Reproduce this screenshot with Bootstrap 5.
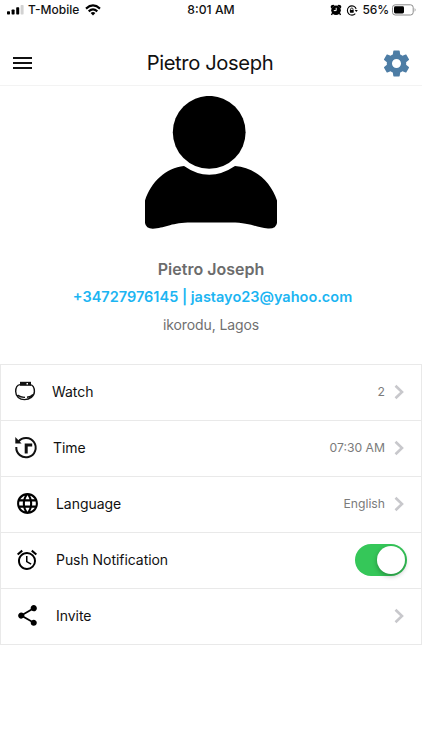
<!DOCTYPE html>
<html lang="en">
<head>
<meta charset="utf-8">
<meta name="viewport" content="width=device-width, initial-scale=1">
<title>Pietro Joseph</title>
<link href="https://cdn.jsdelivr.net/npm/bootstrap@5.3.0/dist/css/bootstrap.min.css" rel="stylesheet">
<style>
body{font-family:Inter,"Liberation Sans",sans-serif;color:#111;background:#fff;overflow:hidden}
svg{display:block;flex:none}
.status{height:20px;font-size:12px;font-weight:500;line-height:20px;padding:0 5px 0 7px;color:#111}
.status>div{flex:1 1 0}
.status>.clock{flex:none;font-size:12.2px;padding-right:2px}
.carrier{margin-left:4px;margin-right:6px}
.lock{margin:0 4px 0 4px}
.battery-text{letter-spacing:-.1px}
.cell{margin-left:3px}
.topbar{height:66px;padding:21px 9px 0 13px;border-bottom:1px solid #f3f3f3}
.topbar h1{font-size:20.2px;font-weight:400;line-height:28px;color:#111;letter-spacing:-.38px;padding-right:6px}
.side{width:32px}
.profile{height:278px;padding-top:10px}
.profile-name{font-size:16px;font-weight:600;line-height:20px;color:#6c6c6c;margin-top:30px}
.contact{font-size:14.5px;font-weight:600;line-height:20px;color:#1cb5f2;margin-top:8px;padding-left:3px}
.place{font-size:14px;line-height:20px;color:#707070;margin-top:8px;letter-spacing:-.1px}
.settings-list{--bs-list-group-border-color:#e9e9e9;--bs-list-group-border-radius:0;border-top:1px solid #e9e9e9;border-left:1px solid #e9e9e9;border-right:1px solid #e9e9e9}
.entry{height:56px;border-width:0 0 1px!important;padding:0 17px 2px 13px;font-size:14px;letter-spacing:-.05px;color:#111}
.glyph{width:26px;display:flex;justify-content:center;margin-right:16px}
.glyph-watch{width:22px}
.glyph-time{width:24px;margin-right:15px}
.value{font-size:12.2px;color:#7b7b7b;margin-right:9px;padding-top:2px;letter-spacing:0}
.form-switch .toggle{width:52px;height:32px;margin:1px -3px 0 0;border:0;background-color:#35c759;border-radius:16px;background-image:none;position:relative}
.form-switch .toggle:checked{background-image:none;background-color:#35c759}
.toggle::after{content:"";position:absolute;right:2px;top:2px;width:28px;height:28px;border-radius:50%;background:#fff;box-shadow:0 2px 5px rgba(0,0,0,.3)}
</style>
</head>
<body>
<header>
<div class="status d-flex align-items-center">
<div class="d-flex align-items-center">
<svg width="17" height="10" viewBox="0 0 17 10"><rect y="6.200" width="3" height="3.300" rx=".7"/><rect x="4.600" y="4.600" width="3" height="4.900" rx=".7"/><rect x="9.200" y="2.300" width="3" height="7.200" rx=".7"/><rect x="13.600" width="3" height="9.500" rx=".7" fill="#d2d2d2"/></svg>
<span class="carrier">T-Mobile</span>
<svg class="wifi" width="16" height="12" viewBox="0 0 16 12" fill="none" stroke="#000" stroke-width="2.100"><path d="M1 4.600Q8-1.700 15 4.600M3.700 7.400Q8 3.500 12.300 7.400"/><path d="M5.600 9Q8 7 10.400 9L8 11.600z" fill="#000" stroke="none"/></svg>
</div>
<div class="clock">8:01 AM</div>
<div class="d-flex align-items-center justify-content-end">
<svg width="12" height="12" viewBox="0 0 12 12"><path d="M.8 3.600Q.2.800 3.500.800L4.500 1.500 1.400 4.500zM11.200 3.600Q11.800.800 8.500.800L7.500 1.500l3.100 3z"/><circle cx="6" cy="6.300" r="4.800"/><path d="M2.500 9l-1 2M9.500 9l1 2" stroke="#000" stroke-width="1.400"/><path d="M6.200 3.800v2.800H3.800" stroke="#fff" fill="none"/></svg>
<svg class="lock" width="12" height="11" viewBox="0 0 12 11" fill="none" stroke="#000" stroke-width="1.100"><path d="M9.300 2.300A4.600 4.600 0 1 0 9.300 8.700M10 4.100A4.600 4.600 0 0 0 9.300 2.300"/><path d="M8.700 5h3.100l-1.500 2z" fill="#000" stroke="none"/><rect x="3.900" y="5" width="3.800" height="2.700" rx=".4" fill="#000" stroke="none"/><path d="M4.600 5.200V4.100Q4.600 3 5.800 3T7 4.100v1.100" stroke-width=".8"/></svg>
<span class="battery-text">56%</span>
<svg class="cell" width="25" height="12" viewBox="0 0 25 12"><rect x=".5" y=".8" width="20.700" height="10.200" rx="2.700" fill="none" stroke="#8b8b8b"/><rect x="2" y="2.300" width="10" height="7.200" rx="1.400"/><path d="M22.600 4q2 1.800 0 3.800z" fill="#999"/></svg>
</div>
</div>
<nav class="topbar d-flex align-items-center justify-content-between">
<div class="side"><svg width="20" height="14" viewBox="0 0 20 14"><path d="M0 2h19M0 7h19M0 12h19" stroke="#111" stroke-width="2"/></svg></div>
<h1 class="m-0">Pietro Joseph</h1>
<div class="side"><svg width="31" height="31" viewBox="0 0 24 24" fill="#4d7da5"><path d="M19.430 12.980c.04-.32.07-.64.07-.98s-.03-.66-.07-.98l2.110-1.650c.19-.15.24-.42.12-.64l-2-3.460c-.12-.22-.39-.3-.61-.22l-2.490 1c-.52-.4-1.080-.73-1.690-.98l-.38-2.650A.488.488 0 0 0 14 2h-4c-.25 0-.46.18-.49.42l-.38 2.650c-.61.25-1.170.59-1.690.98l-2.490-1c-.23-.09-.49 0-.61.22l-2 3.460c-.13.22-.07.49.12.64l2.110 1.650c-.04.32-.07.65-.07.98s.03.66.07.98l-2.110 1.650c-.19.15-.24.42-.12.64l2 3.460c.12.22.39.3.61.22l2.490-1c.52.4 1.080.73 1.690.98l.38 2.650c.03.24.24.42.49.42h4c.25 0 .46-.18.49-.42l.38-2.650c.61-.25 1.170-.59 1.690-.98l2.490 1c.23.09.49 0 .61-.22l2-3.460c.12-.22.07-.49-.12-.64zM12 15.500c-1.930 0-3.500-1.570-3.500-3.500s1.570-3.500 3.500-3.500 3.500 1.570 3.500 3.500-1.570 3.500-3.500 3.500"/></svg></div>
</nav>
</header>
<main>
<section class="profile text-center">
<svg class="mx-auto" width="132" height="133" viewBox="0 0 132 133"><circle cx="64.200" cy="36.300" r="36.400"/><path d="M39 70Q64 87.500 90 70C110 71.500 126 86 132 104.500V127Q131 133 123 132.500C111 131.500 105 126.500 86 126.500H46C27 126.500 21 131.500 10 132.500Q1 133.500 0 127V104.500C6 86 21 71.500 39 70z"/></svg>
<div class="profile-name">Pietro Joseph</div>
<div class="contact">+34727976145 | jastayo23@yahoo.com</div>
<div class="place">ikorodu, Lagos</div>
</section>
<div class="list-group settings-list">
<div class="list-group-item entry d-flex align-items-center">
<span class="glyph glyph-watch"><svg width="22" height="22" viewBox="0 0 22 22" fill="none" stroke="#111" stroke-width="1.400"><path d="M6 3.600C3 4 1.700 6.500 1.700 10.500 1.700 15.500 5.500 18.600 10.500 18.600S20.400 15.500 20.400 10.500C20.400 6.500 19 4 16 3.600M3.500 14.200Q7 16.600 11 16.300M13 16.300Q17 16 19 13.500"/><path d="M6 .8h11v4H6z" fill="#111" stroke="none"/><path d="M12.500 2.700h1.500" stroke="#fff"/></svg></span>
<span>Watch</span><span class="value ms-auto">2</span>
<svg width="10" height="16" viewBox="0 0 10 16" fill="none" stroke="#c8c8cc" stroke-width="2.600"><path d="M1.500 1.700L8 8 1.500 14.300"/></svg>
</div>
<div class="list-group-item entry d-flex align-items-center">
<span class="glyph glyph-time"><svg width="24" height="24" viewBox="0 0 24 24" fill="none" stroke="#111" stroke-width="2"><path d="M4.300 5.700A9.700 9.700 0 1 1 2.300 11"/><path d="M1.300 1v6.400h6.300z" fill="#111" stroke="none"/><path d="M12.200 17.500V9h6" stroke-width="3"/></svg></span>
<span>Time</span><span class="value ms-auto">07:30 AM</span>
<svg width="10" height="16" viewBox="0 0 10 16" fill="none" stroke="#c8c8cc" stroke-width="2.600"><path d="M1.500 1.700L8 8 1.500 14.300"/></svg>
</div>
<div class="list-group-item entry d-flex align-items-center">
<span class="glyph"><svg width="25" height="25" viewBox="0 0 24 24"><path d="M11.990 2C6.470 2 2 6.480 2 12s4.470 10 9.990 10C17.520 22 22 17.520 22 12S17.520 2 11.990 2zm6.930 6h-2.950c-.32-1.250-.78-2.450-1.380-3.560 1.840.63 3.370 1.910 4.330 3.560zM12 4.040c.83 1.200 1.480 2.530 1.910 3.960h-3.820c.43-1.430 1.080-2.760 1.910-3.960zM4.260 14C4.100 13.360 4 12.690 4 12s.1-1.360.26-2h3.380c-.08.66-.14 1.320-.14 2 0 .68.06 1.340.14 2H4.260zm.82 2h2.950c.32 1.250.78 2.450 1.380 3.560-1.840-.63-3.370-1.900-4.330-3.560zm2.950-8H5.080c.96-1.660 2.490-2.930 4.330-3.560C8.810 5.550 8.350 6.750 8.030 8zM12 19.960c-.83-1.200-1.480-2.530-1.910-3.960h3.820c-.43 1.430-1.080 2.760-1.910 3.960zM14.340 14H9.660c-.09-.66-.16-1.320-.16-2 0-.68.07-1.350.16-2h4.680c.09.65.16 1.320.16 2 0 .68-.07 1.340-.16 2zm.25 5.560c.6-1.110 1.060-2.310 1.380-3.560h2.950c-.96 1.650-2.490 2.930-4.330 3.560zM16.360 14c.08-.66.14-1.320.14-2 0-.68-.06-1.340-.14-2h3.380c.16.64.26 1.310.26 2s-.1 1.360-.26 2h-3.380z"/></svg></span>
<span>Language</span><span class="value ms-auto">English</span>
<svg width="10" height="16" viewBox="0 0 10 16" fill="none" stroke="#c8c8cc" stroke-width="2.600"><path d="M1.500 1.700L8 8 1.500 14.300"/></svg>
</div>
<label class="list-group-item entry d-flex align-items-center" for="push">
<span class="glyph"><svg width="24" height="24" viewBox="0 0 24 24"><path d="M22 5.720l-4.600-3.860-1.290 1.530 4.600 3.860L22 5.720zM7.880 3.390L6.600 1.860 2 5.710l1.290 1.530 4.590-3.850zM12.500 8H11v6l4.750 2.850.75-1.230-4-2.370V8zM12 4c-4.970 0-9 4.030-9 9s4.020 9 9 9a9 9 0 0 0 0-18zm0 16c-3.870 0-7-3.130-7-7s3.130-7 7-7 7 3.130 7 7-3.130 7-7 7z"/></svg></span>
<span>Push Notification</span>
<span class="form-check form-switch ms-auto p-0 mb-0 d-flex"><input class="form-check-input toggle" type="checkbox" role="switch" id="push" checked></span>
</label>
<div class="list-group-item entry d-flex align-items-center">
<span class="glyph"><svg width="25" height="25" viewBox="0 0 24 24"><path d="M18 16.080c-.76 0-1.440.3-1.960.77L8.910 12.700c.05-.23.09-.46.09-.7s-.04-.47-.09-.7l7.050-4.110c.54.5 1.250.81 2.040.81 1.660 0 3-1.340 3-3s-1.340-3-3-3-3 1.340-3 3c0 .24.04.47.09.7L8.040 9.810C7.500 9.310 6.790 9 6 9c-1.660 0-3 1.340-3 3s1.340 3 3 3c.79 0 1.500-.31 2.040-.81l7.120 4.160c-.05.21-.08.43-.08.65 0 1.610 1.310 2.920 2.920 2.920 1.610 0 2.920-1.310 2.920-2.920s-1.310-2.920-2.920-2.920z"/></svg></span>
<span>Invite</span>
<svg class="ms-auto" width="10" height="16" viewBox="0 0 10 16" fill="none" stroke="#c8c8cc" stroke-width="2.600"><path d="M1.500 1.700L8 8 1.500 14.300"/></svg>
</div>
</div>
</main>
<script src="https://cdn.jsdelivr.net/npm/bootstrap@5.3.0/dist/js/bootstrap.bundle.min.js"></script>
</body>
</html>
